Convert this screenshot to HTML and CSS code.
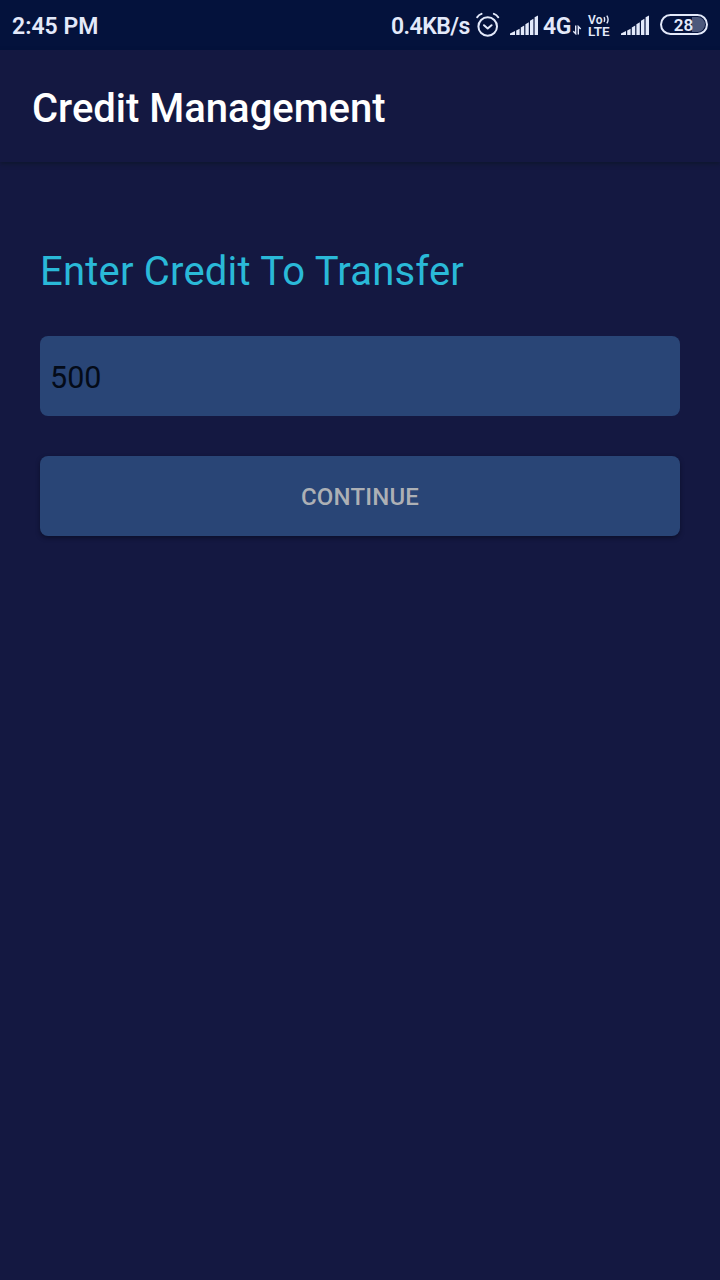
FILE: index.html
```html
<!DOCTYPE html>
<html lang="en">
<head>
<meta charset="utf-8">
<title>Credit Management</title>
<link rel="stylesheet" href="styles.css">
</head>
<body>
<div class="status-bar">
  <span class="clock">2:45 PM</span>
  <span class="net-speed">0.4KB/s</span>
  <svg class="alarm" width="24" height="26" viewBox="0 0 24 26" fill="none" stroke="currentColor" stroke-width="2" stroke-linecap="round" stroke-linejoin="round">
    <circle cx="11.7" cy="14.5" r="9.3"/>
    <path d="M8 13.2l3.7 3.2 3.8-3.2M1.2 5.2Q2.8 2.8 5.5 1.9M22.2 5.2Q20.6 2.8 17.9 1.9"/>
  </svg>
  <svg class="signal signal-first" width="29" height="21" viewBox="0 0 29 21" fill="currentColor">
    <path d="M0 20v-1.5l5-2.4V20zM6.2 15.5l3.4-1.7V20H6.2zM10.8 12.4l3.4-1.9V20h-3.4zM15.4 9.2l3.4-2V20h-3.4zM20 5.7l3.4-2V20H20zM24.6 2.3l3.4-1.8V20h-3.4z"/>
  </svg>
  <span class="network">4G</span>
  <svg class="data-arrows" width="10" height="10" viewBox="0 0 10 10" fill="none" stroke="currentColor" stroke-width="1.4">
    <path d="M3.7 .5v8.2L1.3 6.3M6.3 9.5V1.5L8.7 4"/>
  </svg>
  <div class="volte">
    <div class="volte-row">Vo<svg width="7" height="9" viewBox="0 0 7 9" fill="none" stroke="currentColor" stroke-width="1.4"><path d="M1 2.2q1.3 2.3 0 4.6M3.8 .7q2.6 3.8 0 7.6"/></svg></div>
    <div class="lte">LTE</div>
  </div>
  <svg class="signal signal-second" width="29" height="21" viewBox="0 0 29 21" fill="currentColor">
    <path d="M0 20v-1.5l5-2.4V20zM6.2 15.5l3.4-1.7V20H6.2zM10.8 12.4l3.4-1.9V20h-3.4zM15.4 9.2l3.4-2V20h-3.4zM20 5.7l3.4-2V20H20zM24.6 2.3l3.4-1.8V20h-3.4z"/>
  </svg>
  <div class="battery"><div class="battery-level">28</div></div>
</div>
<header class="app-bar"><h1 class="app-title">Credit Management</h1></header>
<main class="content">
  <label class="prompt" for="credit">Enter Credit To Transfer</label>
  <input class="credit-input" id="credit" type="text" value="500">
  <button class="continue">CONTINUE</button>
</main>
</body>
</html>
```
FILE: styles.css
```css
* { box-sizing: border-box; }
body {
  margin: 0;
  min-height: 1280px;
  background: #141841;
  font-family: Roboto, "Liberation Sans", sans-serif;
}
.status-bar {
  display: flex;
  align-items: flex-start;
  height: 50px;
  padding: 0 12px;
  background: #04123c;
  color: #e3e9fa;
  white-space: nowrap;
}
.status-bar > * { flex: none; }
.clock, .net-speed, .network {
  font-size: 23px;
  font-weight: 600;
  line-height: 53px;
}
.clock { width: 379px; }
.net-speed { width: 85px; letter-spacing: -.55px; }
.alarm { margin-top: 12px; }
.signal { margin-top: 15px; }
.signal-first { margin-left: 10px; }
.network { width: 29px; margin-left: 4px; letter-spacing: -.5px; }
.data-arrows { margin-top: 25px; }
.volte {
  width: 24px;
  margin: 14px 0 0 6px;
  font-size: 13.5px;
  font-weight: 600;
}
.volte-row { display: flex; height: 10px; font-size: 12px; line-height: 12px; letter-spacing: .2px; }
.volte-row svg { margin-top: 1px; }
.lte { height: 14px; line-height: 14px; }
.signal-second { margin-left: 9px; }
.battery {
  width: 48px;
  height: 21px;
  margin: 14px 0 0 10px;
  padding: 1px;
  border: 2px solid #e3e9fa;
  border-radius: 11px;
}
.battery-level {
  height: 15px;
  padding-right: 1px;
  border-radius: 8px;
  background: linear-gradient(90deg, transparent 29px, #4c587c 29px);
  font-size: 17px;
  font-weight: 600;
  line-height: 16px;
  text-align: center;
}
.app-bar {
  display: flex;
  align-items: center;
  height: 112px;
  padding: 6px 32px 0;
  background: #141841;
  box-shadow: 0 2px 4px rgba(10, 22, 34, .6);
}
.app-title {
  margin: 0;
  color: #fff;
  font-size: 40px;
  font-weight: 500;
  line-height: 48px;
}
.content {
  display: flex;
  flex-direction: column;
  padding: 83px 40px 0;
}
.prompt {
  height: 91px;
  color: #2ab9d8;
  font-size: 40px;
  line-height: 54px;
  letter-spacing: .2px;
}
.credit-input {
  width: 100%;
  height: 80px;
  padding: 2px 10px 0;
  border: 0;
  border-radius: 8px;
  outline: 0;
  background: #294576;
  color: #040b18;
  font: 400 30.5px Roboto, "Liberation Sans", sans-serif;
}
.continue {
  height: 80px;
  margin-top: 40px;
  padding: 2px 0 0;
  border: 0;
  border-radius: 8px;
  background: #294576;
  color: #adb0b5;
  box-shadow: 0 2px 4px rgba(5, 10, 25, .55);
  font: 500 24px Roboto, "Liberation Sans", sans-serif;
  letter-spacing: .2px;
}
```
